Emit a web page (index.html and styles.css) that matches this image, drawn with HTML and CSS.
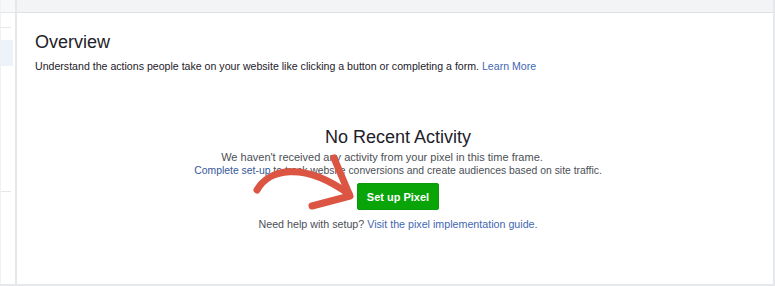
FILE: index.html
```html
<!DOCTYPE html>
<html lang="en">
<head>
    <meta charset="UTF-8">
    <meta name="viewport" content="width=device-width, initial-scale=1.0">
    <title>Pixel Overview</title>
    <link rel="stylesheet" href="styles.css">
</head>
<body>

    <div class="layout">
        <div class="sidebar">
            <div class="side-top"></div>
            <div class="side-rule"></div>
            <div class="side-active"></div>
            <div class="side-rule lower"></div>
        </div>

        <div class="main">
            <div class="topbar"></div>
            <div class="card">
                <h1 class="title">Overview</h1>
                <p class="intro">Understand the actions people take on your website like clicking a button or completing a form. <a href="#">Learn More</a></p>

                <div class="empty">
                    <h2>No Recent Activity</h2>
                    <p class="desc">
                        <span class="desc-first">We haven't received any activity from your pixel in this time frame.</span>
                        <span class="desc-second"><a class="dark-link" href="#">Complete set-up</a> to track website conversions and create audiences based on site traffic.</span>
                    </p>
                    <button class="btn-green">Set up Pixel</button>
                    <p class="help">Need help with setup? <a href="#">Visit the pixel implementation guide.</a></p>
                </div>
            </div>
        </div>

        <!-- hand drawn pointer over the content -->
        <svg class="arrow" width="775" height="286" viewBox="0 0 775 286">
            <path d="M257 190 C 268 170, 302 160, 349 194" />
            <path d="M334 158 L350 196 L312 206" />
        </svg>
    </div>

</body>
</html>
```

FILE: styles.css
```css
body {
    margin: 0;
    font-family: "Liberation Sans", Helvetica, Arial, sans-serif;
    background-color: #fff;
    color: #1d2129;
}
.layout {
    position: relative;
    display: flex;
    height: 284px;
    border-bottom: 2px solid #e7e8eb;
}
.sidebar {
    width: 17px;
    border-right: 2px solid #e6e7ea;
    border-left: 1px solid #f0f1f3;
    box-sizing: border-box;
}
.side-top {
    height: 12px;
    border-bottom: 1px solid #e4e6e9;
    background-color: #f7f8f9;
}
.side-rule {
    width: 10px;
    height: 1px;
    margin-top: 14px;
    background-color: #e6e7ea;
}
.side-rule.lower {
    margin-top: 125px;
}
.side-active {
    width: 12px;
    height: 26px;
    margin-top: 12px;
    background-color: #eef3fb;
}
.main {
    flex: 1;
    display: flex;
    flex-direction: column;
    border-right: 2px solid #e6e7ea;
}
.topbar {
    height: 12px;
    background-color: #f3f4f6;
    border-bottom: 1px solid #dfe1e5;
}
.card {
    flex: 1;
    padding: 18px 18px 0;
}
.title {
    margin: 0;
    font-size: 18px;
    line-height: 22px;
    font-weight: normal;
    color: #1d2129;
}
.intro {
    margin: 6px 0 0;
    font-size: 10.6px;
    line-height: 14px;
    color: #1d2129;
}
a {
    color: #4267b2;
    text-decoration: none;
}
.empty {
    text-align: center;
    margin-top: 53px;
    padding-left: 6px;
}
.empty h2 {
    margin: 0;
    font-size: 18px;
    line-height: 22px;
    font-weight: normal;
    color: #1d2129;
}
.desc {
    margin: 3px 0 0;
    font-size: 11px;
    line-height: 13px;
    color: #4b4f56;
}
.desc-first {
    display: block;
    margin-right: 32px;
}
.desc-second {
    display: block;
    font-size: 10.4px;
}
.dark-link {
    color: #365899;
}
.btn-green {
    margin-top: 6px;
    width: 82px;
    height: 27px;
    border: 1px solid #0c9a0c;
    border-radius: 2px;
    background-color: #08a408;
    color: #fff;
    font-family: inherit;
    font-size: 11px;
    font-weight: bold;
}
.help {
    margin: 7px 0 0;
    font-size: 10.7px;
    line-height: 14px;
    color: #4b4f56;
}
.arrow {
    position: absolute;
    left: 0;
    top: 0;
    pointer-events: none;
}
.arrow path {
    fill: none;
    stroke: #dc5543;
    stroke-width: 7;
    stroke-linecap: round;
    stroke-linejoin: round;
}
```
